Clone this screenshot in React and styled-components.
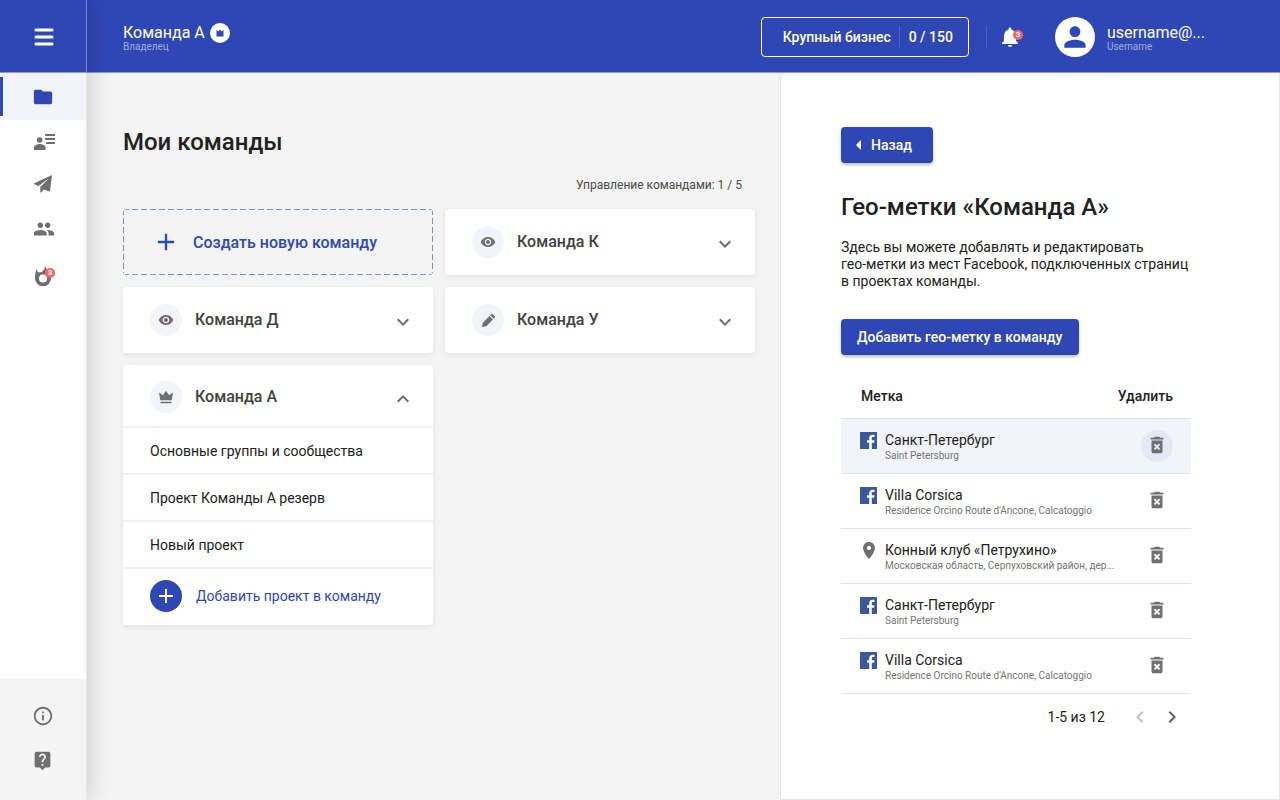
import React, { useState } from 'react';
import styled, { createGlobalStyle } from 'styled-components';
import {
  MdAdd,
  MdArrowLeft,
  MdChevronLeft,
  MdChevronRight,
  MdDeleteForever,
  MdExpandLess,
  MdExpandMore,
  MdFolder,
  MdInfoOutline,
  MdLiveHelp,
  MdNotifications,
  MdPeople,
  MdPerson,
  MdVisibility
} from 'react-icons/md';

const blue = '#2f47b5';
const grey = '#6f6f6f';
const pale = '#f3f4fa';

const GlobalStyle = createGlobalStyle`
  * {
    box-sizing: border-box;
  }
  body {
    margin: 0;
    background: #f4f4f4;
    color: #212121;
    font-family: Roboto, 'Liberation Sans', sans-serif;
    font-size: 14px;
  }
  button {
    padding: 0;
    border: 0;
    background: none;
    color: inherit;
    font: inherit;
    cursor: pointer;
  }
  a {
    color: inherit;
    text-decoration: none;
  }
  h1, h2, p, ul {
    margin: 0;
    padding: 0;
  }
  svg {
    display: block;
    flex-shrink: 0;
  }
`;

const Page = styled.div`
  display: flex;
  min-height: 100vh;
`;

const Sidebar = styled.aside`
  position: relative;
  z-index: 1;
  display: flex;
  flex-direction: column;
  flex: 0 0 87px;
  border-right: 1px solid #e6e6e6;
  background: #fff;
  box-shadow: 4px 0 20px rgba(0, 0, 0, 0.15);
`;

const MenuButton = styled.button`
  display: flex;
  align-items: center;
  justify-content: center;
  height: 73px;
  margin-right: -1px;
  padding: 2px 0 0 1px;
  border-right: 1px solid #7684ce;
  border-bottom: 1px solid #8d99d6;
  background: ${blue};
  color: #fff;
`;

const Nav = styled.nav`
  display: flex;
  flex-direction: column;
  flex: 1;
`;

const NavLink = styled.a`
  display: flex;
  align-items: center;
  height: ${props => props.$height || 45}px;
  padding-left: 33px;
  color: ${grey};
`;

const ActiveLink = styled(NavLink)`
  padding-left: 32px;
  background: linear-gradient(${blue}, ${blue}) 0 4px / 3px 39px no-repeat ${pale};
  color: ${blue};
`;

const NavFooter = styled.div`
  display: flex;
  flex-direction: column;
  height: 121px;
  padding-top: 14px;
  background: #f4f4f4;

  ${NavLink} {
    padding-left: 32px;
  }
`;

const WithBadge = styled.span`
  position: relative;
  display: block;
`;

const Badge = styled.span`
  position: absolute;
  top: ${props => props.$top}px;
  right: -1px;
  width: 10px;
  height: 10px;
  border-radius: 50%;
  background: #fb6467;
  color: #fff;
  font-size: 8px;
  font-weight: 700;
  line-height: 10px;
  text-align: center;
`;

const Body = styled.div`
  display: flex;
  flex-direction: column;
  flex: 1;
  min-width: 0;
`;

const Header = styled.header`
  display: flex;
  align-items: center;
  height: 73px;
  padding: 2px 75px 0 36px;
  border-bottom: 1px solid #8d99d6;
  background: ${blue};
  color: #fff;
`;

const Label = styled.div`
  font-size: 16px;
  line-height: 18px;
`;

const SubLabel = styled.div`
  color: #a0abde;
  font-size: 10px;
  line-height: 10px;
`;

const CurrentTeam = styled.div`
  flex: 1;
  padding-top: 2px;
`;

const TeamLine = styled.div`
  display: flex;
  align-items: center;
  gap: 5px;
  height: 18px;
`;

const Tariff = styled.button`
  display: flex;
  align-items: center;
  height: 40px;
  padding: 0 15px 0 21px;
  border: 1px solid #fff;
  border-radius: 4px;
  font-weight: 500;
`;

const Divider = styled.span`
  width: 1px;
  height: 22px;
  margin: ${props => props.$margin};
  background: #4a5fc0;
`;

const User = styled.a`
  display: flex;
  align-items: center;
  gap: 12px;
  margin-left: 33px;
`;

const Avatar = styled.span`
  display: flex;
  align-items: center;
  justify-content: center;
  width: 40px;
  height: 40px;
  border-radius: 50%;
  background: #fff;
  color: ${blue};
`;

const UserText = styled.span`
  padding-top: 2px;
`;

const Content = styled.div`
  display: flex;
  flex: 1;
`;

const Main = styled.main`
  flex: 1;
  padding: 54px 25px 54px 36px;
`;

const Title = styled.h1`
  font-size: 24px;
  font-weight: 500;
  line-height: 30px;
`;

const Counter = styled.p`
  padding: 20px 13px 16px 0;
  color: #4a4a4a;
  font-size: 12px;
  line-height: 16px;
  text-align: right;
`;

const Teams = styled.div`
  display: grid;
  grid-template-columns: 1fr 1fr;
  align-items: start;
  gap: 12px;
`;

const dash = (angle, size, place) =>
  `repeating-linear-gradient(${angle}, #7f8dd1 0 6px, transparent 6px 9px) ${place} / ${size} no-repeat`;

const CreateTeam = styled.button`
  display: flex;
  align-items: center;
  gap: 13px;
  height: 66px;
  padding-left: 29px;
  border-radius: 4px;
  background:
    ${dash('90deg', '100% 1px', 'top')},
    ${dash('90deg', '100% 1px', 'bottom')},
    ${dash('180deg', '1px 100%', 'left')},
    ${dash('180deg', '1px 100%', 'right')};
  color: ${blue};
  font-size: 16px;
  font-weight: 500;
`;

const Card = styled.section`
  overflow: hidden;
  border-radius: 4px;
  background: #fff;
  box-shadow: 0 2px 6px rgba(0, 0, 0, 0.07);
`;

const CardHead = styled.button`
  display: flex;
  align-items: center;
  gap: 13px;
  width: 100%;
  height: ${props => (props.$open ? 61 : 66)}px;
  padding: ${props => (props.$open ? 3 : 0)}px 18px 0 27px;
  color: #424242;
  font-size: 16px;
  font-weight: 500;
  text-align: left;
`;

const CardName = styled.span`
  flex: 1;
  padding-bottom: 2px;
`;

const Chevron = styled.span`
  padding-top: 3px;
  color: ${grey};
`;

const Role = styled.span`
  display: flex;
  align-items: center;
  justify-content: center;
  width: 32px;
  height: 32px;
  border-radius: 50%;
  background: ${props => (props.$filled ? blue : pale)};
  color: ${props => (props.$filled ? '#fff' : grey)};
`;

const Projects = styled.ul`
  list-style: none;
`;

const Project = styled.li`
  height: 47px;
  padding-left: 27px;
  border-top: 2px solid #eef1fa;
  line-height: 46px;
`;

const AddProject = styled.button`
  display: flex;
  align-items: center;
  gap: 14px;
  width: 100%;
  height: 58px;
  padding: 0 0 2px 27px;
  border-top: 2px solid #eef1fa;
  color: ${blue};
`;

const Panel = styled.section`
  flex: 0 0 500px;
  padding: 54px 88px 54px 60px;
  border: 1px solid #e6e6e6;
  border-top: 0;
  background: #fff;
`;

const Button = styled.button`
  display: flex;
  align-items: center;
  height: 36px;
  padding: ${props => props.$padding || '0 17px 0 16px'};
  border-radius: 4px;
  background: ${blue};
  box-shadow: 0 2px 3px rgba(0, 0, 0, 0.25);
  color: #fff;
  font-weight: 500;
`;

const PanelTitle = styled(Title)`
  margin-top: 29px;
`;

const Text = styled.p`
  padding: 17px 0 29px;
  line-height: 17px;
  white-space: pre-line;
`;

const Table = styled.table`
  width: 100%;
  margin-top: 18px;
  border-collapse: collapse;
  table-layout: fixed;
`;

const HeadCell = styled.th`
  height: 45px;
  padding: ${props => (props.$right ? '2px 18px 0 0' : '2px 0 0 20px')};
  width: ${props => (props.$right ? '76px' : 'auto')};
  font-weight: 500;
  text-align: ${props => (props.$right ? 'right' : 'left')};
  white-space: nowrap;
`;

const Row = styled.tr`
  height: 55px;
  border-top: 1px solid #dfe3f3;
  border-bottom: 1px solid #dfe3f3;
  background: ${props => (props.$active ? pale : 'none')};
`;

const Cell = styled.td`
  padding: 0 0 0 19px;
`;

const DeleteCell = styled.td`
  padding: 0 18px 0 0;
`;

const Mark = styled.div`
  display: grid;
  grid-template-columns: 17px 1fr;
  gap: 8px;
`;

const MarkIcon = styled.span`
  display: flex;
  justify-content: center;
  padding-top: 2px;
  color: ${grey};
`;

const MarkName = styled.div`
  line-height: 20px;
`;

const MarkAddress = styled.div`
  overflow: hidden;
  color: #757575;
  font-size: 10px;
  line-height: 12px;
  text-overflow: ellipsis;
  white-space: nowrap;
`;

const Delete = styled.button`
  display: flex;
  align-items: center;
  justify-content: center;
  width: 32px;
  height: 32px;
  margin-left: auto;
  padding-bottom: 2px;
  border-radius: 50%;
  background: ${props => (props.$active ? '#e4e8f5' : 'none')};
  color: ${grey};
`;

const Pager = styled.div`
  display: flex;
  align-items: center;
  justify-content: flex-end;
  gap: 8px;
  padding: 11px 7px 0 0;
`;

const PagerText = styled.span`
  margin-right: 15px;
`;

const PagerButton = styled.button`
  color: #616161;

  &:disabled {
    color: #c4c4c4;
  }
`;

const MenuIcon = () => (
  <svg width="20" height="18" viewBox="0 0 20 18" stroke="currentColor" strokeWidth="3" strokeLinecap="round">
    <path d="M2 2h16M2 9h16M2 16h16" />
  </svg>
);

const ContactsIcon = () => (
  <svg width="22" height="18" viewBox="0 0 22 18" fill="currentColor">
    <circle cx="6.7" cy="7" r="2.8" />
    <path d="M1 17v-2.2c0-2.5 3.6-3.7 5.800-3.700s5.800 1.200 5.800 3.700V17zM12 1h10v2H12zM12 5h10v2H12zM13 9h9v2h-9z" />
  </svg>
);

const PlaneIcon = () => (
  <svg width="19" height="18" viewBox="-1 0 19 18" fill="currentColor">
    <path d="M18 0L.3 8.200c-.4.2-.4.8 0 1L4.500 11 15 3.200 6.300 12v5.300c0 .4.5.6.8.3l2.600-3 5.500 1.900c.4.1.8-.1.8-.5z" />
  </svg>
);

const FlameIcon = () => (
  <svg width="21" height="24" viewBox="2 0 21 24" fill="currentColor" fillRule="evenodd">
    <path d="M14.300.8c.5 2.500 1.700 4.200 3.400 6.400C19.300 9.200 20 11.200 20 13.300a8 8 0 0 1-16 0C4 10 4.600 7 5.500 3.800c.4 2.400 1.400 3.700 3 3.700 2.700 0 5.200-2.700 5.800-6.700zM12 9.500a4 4 0 1 0 .01 8 4 4 0 0 0-.01-8z" />
  </svg>
);

const CrownIcon = () => (
  <svg width="16" height="16" viewBox="0 0 16 16" fill="currentColor">
    <path d="M2.300 11.300L1 3.500l3.900 2.800L8 1.800l3.100 4.500L15 3.500l-1.300 7.800zM2.500 12.700h11v1.500h-11z" />
  </svg>
);

const PencilIcon = () => (
  <svg width="13" height="13" viewBox="0 0 12 12" fill="currentColor">
    <path d="M0 12l.8-4L6.900 1.900l3.200 3.200L4 11.200zM7.700 1.100l.8-.8c.4-.4 1-.4 1.400 0l1.800 1.800c.4.4.4 1 0 1.400l-.8.8z" />
  </svg>
);

const PinIcon = () => (
  <svg width="12" height="17" viewBox="5 2 14 20" fill="currentColor">
    <path d="M12 2C8.130 2 5 5.130 5 9c0 5.250 7 13 7 13s7-7.750 7-13c0-3.870-3.130-7-7-7zm0 9.500a2.500 2.500 0 0 1 0-5 2.500 2.500 0 0 1 0 5z" />
  </svg>
);

const OwnerIcon = () => (
  <svg width="20" height="20" viewBox="0 0 20 20">
    <circle cx="10" cy="10" r="10" fill="#fff" />
    <path d="M6.500 13.500V6.700l2 1.800L10 6.500l1.500 2 2-1.800v6.800z" fill={blue} />
  </svg>
);

const FacebookIcon = () => (
  <svg width="17" height="17" viewBox="0 0 17 17">
    <path d="M0 0h17v17H0z" fill="#3b5998" />
    <path
      d="M9.200 17v-6.300H7V8.200h2.200V6.200c0-2.300 1.400-3.500 3.400-3.500.9 0 1.700.1 1.900.1v2.300h-1.300c-1.100 0-1.400.5-1.400 1.300v1.800h2.600l-.3 2.500h-2.300V17z"
      fill="#fff"
    />
  </svg>
);

const roles = {
  viewer: <MdVisibility size={16} />,
  editor: <PencilIcon />,
  owner: <CrownIcon />
};

const teams = [
  { name: 'Команда К', role: 'viewer' },
  { name: 'Команда Д', role: 'viewer' },
  { name: 'Команда У', role: 'editor' },
  {
    name: 'Команда А',
    role: 'owner',
    projects: ['Основные группы и сообщества', 'Проект Команды А резерв', 'Новый проект']
  }
];

const marks = [
  { name: 'Санкт-Петербург', address: 'Saint Petersburg', facebook: true },
  { name: 'Villa Corsica', address: "Residence Orcino Route d'Ancone, Calcatoggio", facebook: true },
  { name: 'Конный клуб «Петрухино»', address: 'Московская область, Серпуховский район, дер...' },
  { name: 'Санкт-Петербург', address: 'Saint Petersburg', facebook: true },
  { name: 'Villa Corsica', address: "Residence Orcino Route d'Ancone, Calcatoggio", facebook: true }
];

function Team({ name, role, projects }) {
  const [open, setOpen] = useState(Boolean(projects));

  return (
    <Card>
      <CardHead $open={open} aria-expanded={open} onClick={() => setOpen(!open)}>
        <Role>{roles[role]}</Role>
        <CardName>{name}</CardName>
        <Chevron>{open ? <MdExpandLess size={24} /> : <MdExpandMore size={24} />}</Chevron>
      </CardHead>
      {open && (
        <Projects>
          {(projects || []).map(project => (
            <Project key={project}>
              <a href="#project">{project}</a>
            </Project>
          ))}
          <li>
            <AddProject>
              <Role $filled>
                <MdAdd size={24} />
              </Role>
              Добавить проект в команду
            </AddProject>
          </li>
        </Projects>
      )}
    </Card>
  );
}

function GeoMarks() {
  return (
    <Panel>
      <Button $padding="0 21px 0 6px">
        <MdArrowLeft size={24} />
        Назад
      </Button>
      <PanelTitle as="h2">Гео-метки «Команда А»</PanelTitle>
      <Text>
        {'Здесь вы можете добавлять и редактировать\nгео-метки из мест Facebook, подключенных страниц\nв проектах команды.'}
      </Text>
      <Button>Добавить гео-метку в команду</Button>
      <Table>
        <thead>
          <tr>
            <HeadCell>Метка</HeadCell>
            <HeadCell $right>Удалить</HeadCell>
          </tr>
        </thead>
        <tbody>
          {marks.map((mark, i) => (
            <Row key={i} $active={i === 0}>
              <Cell>
                <Mark>
                  <MarkIcon>{mark.facebook ? <FacebookIcon /> : <PinIcon />}</MarkIcon>
                  <div>
                    <MarkName>{mark.name}</MarkName>
                    <MarkAddress>{mark.address}</MarkAddress>
                  </div>
                </Mark>
              </Cell>
              <DeleteCell>
                <Delete $active={i === 0} aria-label="Удалить">
                  <MdDeleteForever size={22} />
                </Delete>
              </DeleteCell>
            </Row>
          ))}
        </tbody>
      </Table>
      <Pager>
        <PagerText>1-5 из 12</PagerText>
        <PagerButton disabled aria-label="Назад">
          <MdChevronLeft size={24} />
        </PagerButton>
        <PagerButton aria-label="Вперёд">
          <MdChevronRight size={24} />
        </PagerButton>
      </Pager>
    </Panel>
  );
}

export default function App() {
  return (
    <Page>
      <GlobalStyle />
      <Sidebar>
        <MenuButton aria-label="Меню">
          <MenuIcon />
        </MenuButton>
        <Nav>
          <ActiveLink href="#projects" $height={47} aria-label="Проекты">
            <MdFolder size={22} />
          </ActiveLink>
          <NavLink href="#contacts" $height={44} aria-label="Контакты">
            <ContactsIcon />
          </NavLink>
          <NavLink href="#messages" $height={40} aria-label="Сообщения">
            <PlaneIcon />
          </NavLink>
          <NavLink href="#people" $height={50} aria-label="Люди">
            <MdPeople size={22} />
          </NavLink>
          <NavLink href="#hot" $height={46} aria-label="Популярное">
            <WithBadge>
              <FlameIcon />
              <Badge $top={3}>3</Badge>
            </WithBadge>
          </NavLink>
        </Nav>
        <NavFooter>
          <NavLink href="#info" aria-label="Информация">
            <MdInfoOutline size={22} />
          </NavLink>
          <NavLink href="#help" aria-label="Помощь">
            <MdLiveHelp size={21} />
          </NavLink>
        </NavFooter>
      </Sidebar>
      <Body>
        <Header>
          <CurrentTeam>
            <TeamLine>
              <Label>Команда А</Label>
              <OwnerIcon />
            </TeamLine>
            <SubLabel>Владелец</SubLabel>
          </CurrentTeam>
          <Tariff>
            Крупный бизнес
            <Divider $margin="0 9px 0 8px" />
            0 / 150
          </Tariff>
          <Divider $margin="0 11px 0 17px" />
          <button aria-label="Уведомления">
            <WithBadge>
              <MdNotifications size={24} />
              <Badge $top={5}>3</Badge>
            </WithBadge>
          </button>
          <User href="#user">
            <Avatar>
              <MdPerson size={32} />
            </Avatar>
            <UserText>
              <Label>username@...</Label>
              <SubLabel>Username</SubLabel>
            </UserText>
          </User>
        </Header>
        <Content>
          <Main>
            <Title>Мои команды</Title>
            <Counter>Управление командами: 1 / 5</Counter>
            <Teams>
              <CreateTeam>
                <MdAdd size={28} />
                Создать новую команду
              </CreateTeam>
              {teams.map(team => (
                <Team key={team.name} {...team} />
              ))}
            </Teams>
          </Main>
          <GeoMarks />
        </Content>
      </Body>
    </Page>
  );
}
